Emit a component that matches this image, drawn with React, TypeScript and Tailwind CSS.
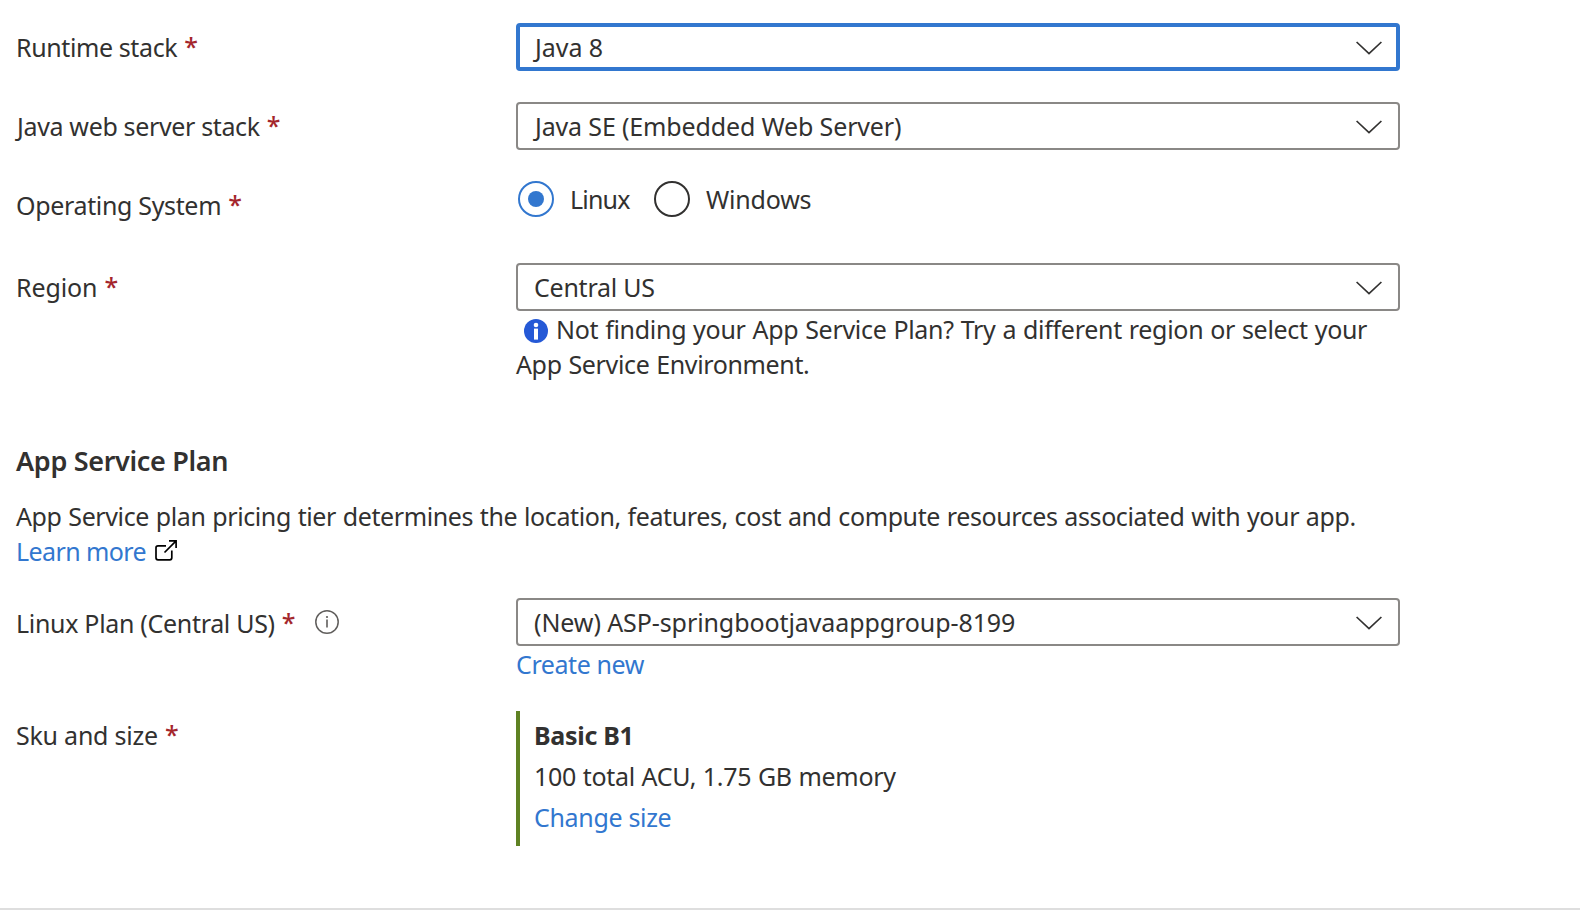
import type { ReactNode } from "react";

function Label({ text, className = "" }: { text: string; className?: string }) {
  return (
    <div className="flex h-[35px] whitespace-nowrap">
      <span className={className}>{text}</span>
      <span className="-mt-px ml-[7px] font-medium text-[#a4262c]">*</span>
    </div>
  );
}

function Select({ children, focused = false }: { children: ReactNode; focused?: boolean }) {
  return (
    <div
      className={`flex h-12 w-[884px] items-center justify-between rounded-[4px] bg-white ${
        focused ? "border-4 border-[#3277cf] px-[14px]" : "border-2 border-[#8a8886] px-4"
      }`}
    >
      <span className="whitespace-nowrap">{children}</span>
      <svg className="mt-px" width="26" height="14" viewBox="0 0 26 14" fill="none" stroke="#323130" strokeWidth="1.7">
        <path d="M0.6 1 L13 12.7 L25.4 1" />
      </svg>
    </div>
  );
}

function Row({ label, children, className = "" }: { label: ReactNode; children: ReactNode; className?: string }) {
  return (
    <div className={`grid grid-cols-[500px_884px] ${className}`}>
      <div className="pt-[7px]">{label}</div>
      <div>{children}</div>
    </div>
  );
}

export default function App() {
  return (
    <div className="h-[920px] w-[1580px] overflow-hidden bg-white font-['Noto_Sans',sans-serif] text-[25px] leading-[35px] text-[#323130]">
      <div className="h-[908px] pt-[23px] pl-4">
        <Row label={<Label text="Runtime stack" className="tracking-[-0.39px]" />}>
          <Select focused>
            <span className="ml-px tracking-[-0.05px]">Java 8</span>
          </Select>
        </Row>

        <Row className="mt-[31px]" label={<Label text="Java web server stack" className="ml-px tracking-[-0.35px]" />}>
          <Select>
            <span className="ml-px tracking-[-0.15px]">Java SE (Embedded Web Server)</span>
          </Select>
        </Row>

        <Row className="mt-[31px] h-[82px]" label={<Label text="Operating System" className="tracking-[-0.34px]" />}>
          <div className="flex h-[36px] items-center pl-[2px]">
            <span className="flex size-9 items-center justify-center rounded-full border-2 border-[#3277cf]">
              <span className="size-4 rounded-full bg-[#3277cf]" />
            </span>
            <span className="ml-4 w-[84px] tracking-[-0.8px]">Linux</span>
            <span className="size-9 rounded-full border-2 border-[#323130]" />
            <span className="ml-4 tracking-[-0.2px]">Windows</span>
          </div>
        </Row>

        <Row label={<Label text="Region" className="tracking-[-0.1px]" />}>
          <Select>
            <span className="tracking-[-0.25px]">Central US</span>
          </Select>
          <div className="mt-px flex whitespace-nowrap">
            <svg className="mt-[7px] ml-2" width="24" height="24" viewBox="0 0 24 24">
              <circle cx="12" cy="12" r="12" fill="#2559d6" />
              <circle cx="12" cy="6" r="2.3" fill="#fff" />
              <rect x="10" y="9.6" width="4" height="11" fill="#fff" />
            </svg>
            <span className="ml-2 tracking-[-0.3px] [word-spacing:0.7px]">
              Not finding your App Service Plan? Try a different region or select your
            </span>
          </div>
          <div className="tracking-[-0.36px] [word-spacing:0.7px]">App Service Environment.</div>
        </Row>

        <h2 className="mt-[61px] text-[27px] font-semibold leading-[35px] tracking-[-0.33px]">App Service Plan</h2>
        <p className="mt-[21px] whitespace-nowrap tracking-[-0.4px] [word-spacing:0.7px]">
          App Service plan pricing tier determines the location, features, cost and compute resources associated with your app.
        </p>
        <div className="flex">
          <a className="tracking-[-0.6px] text-[#3277cf]">Learn more</a>
          <svg className="mt-[6px] ml-[9px]" width="22" height="21" viewBox="0 0 22 21" fill="none" stroke="#000" strokeWidth="1.7">
            <path d="M11 5.8 H3 Q1 5.8 1 7.8 V17.8 Q1 19.8 3 19.8 H14.8 Q16.8 19.8 16.8 17.8 V10.4" />
            <path d="M14 0.9 H21.1 V8 M21.1 0.9 L9.5 12.5" />
          </svg>
        </div>

        <Row
          className="mt-[29px]"
          label={
            <div className="flex pt-px">
              <Label text="Linux Plan (Central US)" className="tracking-[-0.31px]" />
              <svg className="mt-1 ml-5" width="24" height="24" viewBox="0 0 24 24" fill="none" stroke="#605e5c">
                <circle cx="12" cy="12" r="11.2" strokeWidth="1.5" />
                <path d="M12 9.5 V17.6" strokeWidth="1.6" />
                <circle cx="12" cy="7" r="1.1" fill="#605e5c" stroke="none" />
              </svg>
            </div>
          }
        >
          <Select>
            <span className="tracking-[-0.09px]">(New) ASP-springbootjavaappgroup-8199</span>
          </Select>
          <a className="mt-px block tracking-[-0.42px] text-[#3277cf]">Create new</a>
        </Row>

        <Row className="mt-[29px]" label={<Label text="Sku and size" className="tracking-[-0.23px]" />}>
          <div className="flex h-[135px] flex-col gap-[6px] border-l-4 border-[#5f8223] pt-[7px] pl-[14px]">
            <div className="font-bold tracking-[-0.3px]">Basic B1</div>
            <div className="tracking-[-0.32px] [word-spacing:0.6px]">100 total ACU, 1.75 GB memory</div>
            <a className="tracking-[-0.33px] text-[#3277cf]">Change size</a>
          </div>
        </Row>
      </div>
      <div className="h-[2px] bg-[#dedede]" />
    </div>
  );
}
